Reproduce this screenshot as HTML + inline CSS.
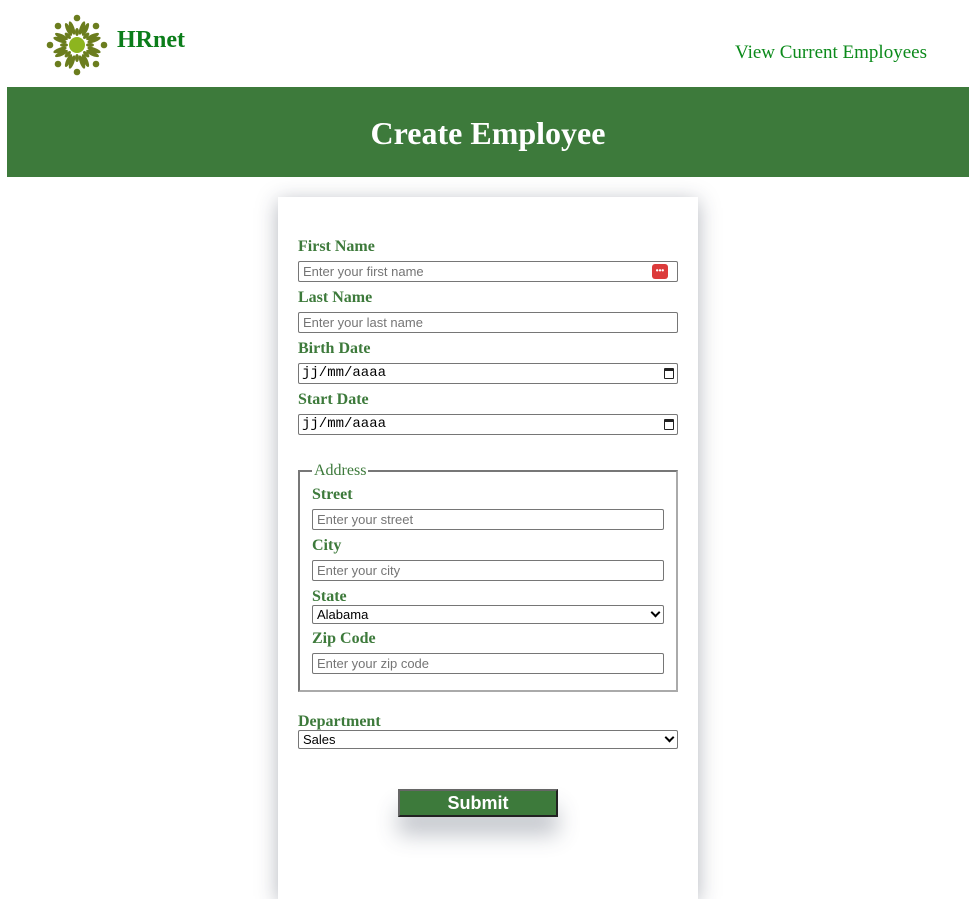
<!DOCTYPE html>
<html><head><meta charset="utf-8"><style>
*{box-sizing:border-box;margin:0;padding:0}
body{width:977px;height:899px;background:#fff;position:relative;overflow:hidden;font-family:"Liberation Serif",serif}
.a{position:absolute}
.lbl{position:absolute;font:bold 16px "Liberation Serif",serif;color:#3d7a3b;line-height:18px}
.in{position:absolute;height:21px;border:1px solid #767676;border-radius:2px;background:#fff;font:13px "Liberation Sans",sans-serif;color:#757575;padding-left:4px;line-height:19px}
.dt{color:#000;font:14px/19px "Liberation Mono",monospace;padding-left:3px}
.sel{position:absolute;height:19px;border:1px solid #767676;border-radius:2px;background:#fff;font:13px "Liberation Sans",sans-serif;color:#000;padding-left:4px;line-height:17px}
.cal{position:absolute;right:3px;top:4px;width:10px;height:11px;border:1.5px solid #222;border-top-width:3px;border-radius:1px}
.chev{position:absolute;right:4px;top:3px;width:7px;height:7px;border-right:2px solid #000;border-bottom:2px solid #000;transform:rotate(45deg)}
</style></head><body>
<svg class="a" style="left:45px;top:14px" width="64" height="62" viewBox="-32 -31 64 62">
<g fill="#6b7d1e">
<circle cx="0" cy="-27" r="3.3"/><circle cx="0" cy="27" r="3.3"/><circle cx="-27" cy="0" r="3.3"/><circle cx="27" cy="0" r="3.3"/>
<circle cx="19" cy="-19" r="3.3"/><circle cx="-19" cy="-19" r="3.3"/><circle cx="19" cy="19" r="3.3"/><circle cx="-19" cy="19" r="3.3"/>
<g id="l"><ellipse cx="5" cy="-17" rx="2.3" ry="7" transform="rotate(20 5 -17)"/><ellipse cx="-5" cy="-17" rx="2.3" ry="7" transform="rotate(-20 -5 -17)"/><ellipse cx="0" cy="-13" rx="2" ry="4"/></g>
<use href="#l" transform="rotate(45)"/><use href="#l" transform="rotate(90)"/><use href="#l" transform="rotate(135)"/><use href="#l" transform="rotate(180)"/><use href="#l" transform="rotate(225)"/><use href="#l" transform="rotate(270)"/><use href="#l" transform="rotate(315)"/>
</g>
<circle r="8" fill="#8db51f"/>
</svg>
<div class="a" style="left:117px;top:27px;font:bold 24px 'Liberation Serif',serif;color:#0b7d1a">HRnet</div>
<div class="a" style="left:735px;top:42px;font:19px 'Liberation Serif',serif;color:#0b8a1a">View Current Employees</div>
<div class="a" style="left:7px;top:87px;width:962px;height:90px;background:#3d7a3b;color:#fff;text-align:center;font:bold 32px 'Liberation Serif',serif;line-height:92px">Create Employee</div>
<div class="a" style="left:278px;top:197px;width:420px;height:702px;background:#fff;box-shadow:0 4px 20px rgba(40,50,70,0.35)"></div>

<div class="lbl" style="left:298px;top:238px">First Name</div>
<div class="in" style="left:298px;top:261px;width:380px">Enter your first name<div class="a" style="right:9px;top:2px;width:16px;height:15px;background:#dc3b3b;border-radius:3px;color:#fff;font:bold 8px sans-serif;text-align:center;line-height:13px">•••</div></div>
<div class="lbl" style="left:298px;top:289px">Last Name</div>
<div class="in" style="left:298px;top:312px;width:380px">Enter your last name</div>
<div class="lbl" style="left:298px;top:340px">Birth Date</div>
<div class="in dt" style="left:298px;top:363px;width:380px">jj/mm/aaaa<div class="cal"></div></div>
<div class="lbl" style="left:298px;top:391px">Start Date</div>
<div class="in dt" style="left:298px;top:414px;width:380px">jj/mm/aaaa<div class="cal"></div></div>

<div class="a" style="left:298px;top:470px;width:380px;height:222px;border:2px solid;border-color:#777 #aaa #aaa #777"></div>
<div class="a" style="left:312px;top:462px;padding:0 2px;background:#fff;font:16px 'Liberation Serif',serif;color:#3d7a3b">Address</div>
<div class="lbl" style="left:312px;top:486px">Street</div>
<div class="in" style="left:312px;top:509px;width:352px">Enter your street</div>
<div class="lbl" style="left:312px;top:537px">City</div>
<div class="in" style="left:312px;top:560px;width:352px">Enter your city</div>
<div class="lbl" style="left:312px;top:588px">State</div>
<div class="sel" style="left:312px;top:605px;width:352px">Alabama<div class="chev"></div></div>
<div class="lbl" style="left:312px;top:630px">Zip Code</div>
<div class="in" style="left:312px;top:653px;width:352px">Enter your zip code</div>

<div class="lbl" style="left:298px;top:713px">Department</div>
<div class="sel" style="left:298px;top:730px;width:380px">Sales<div class="chev"></div></div>

<div class="a" style="left:398px;top:789px;width:160px;height:28px;background:#3d7a3b;border:2px solid #222;border-color:#666 #222 #222 #666;color:#fff;font:bold 18px 'Liberation Sans',sans-serif;text-align:center;line-height:24px;box-shadow:0 18px 22px rgba(60,70,90,0.3)">Submit</div>
</body></html>
